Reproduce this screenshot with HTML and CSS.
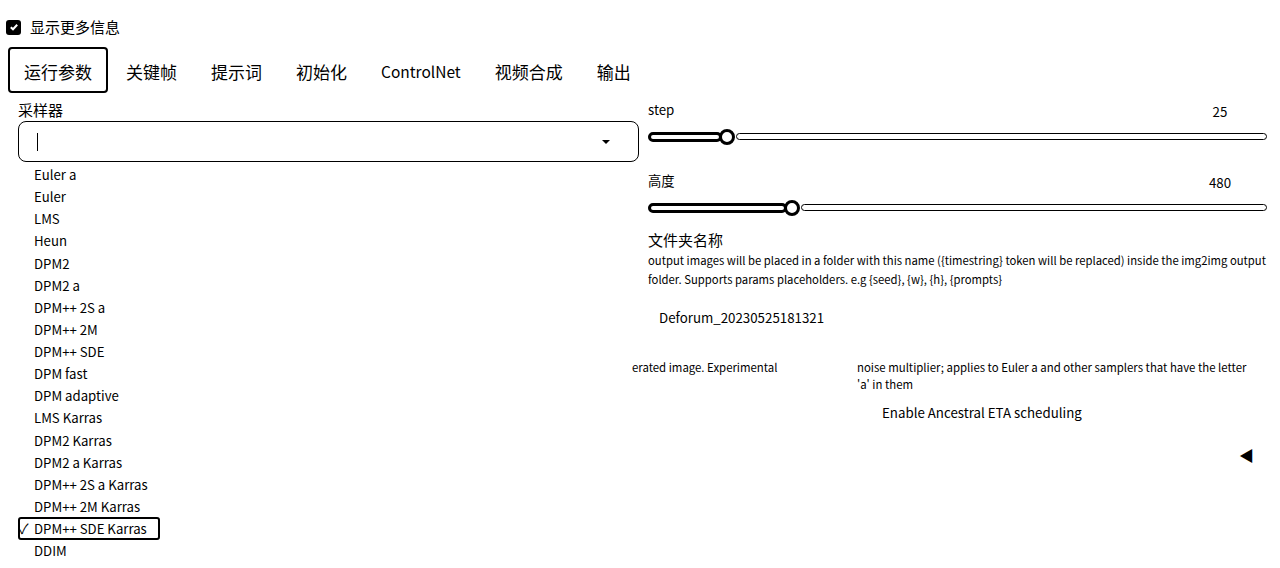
FILE: index.html
```html
<!DOCTYPE html>
<html lang="zh">
<head>
<meta charset="utf-8">
<link rel="stylesheet" href="styles.css">
</head>
<body>
<div class="topbar">
  <span class="cbox"><svg width="10" height="10" viewBox="0 0 10 10"><path d="M1.8 5.2 L4 7.3 L8.2 2.8" fill="none" stroke="#fff" stroke-width="2"/></svg></span>
  <span class="toplabel">显示更多信息</span>
</div>
<div class="tabs">
  <div class="tab active">运行参数</div>
  <div class="tab">关键帧</div>
  <div class="tab">提示词</div>
  <div class="tab">初始化</div>
  <div class="tab latin">ControlNet</div>
  <div class="tab">视频合成</div>
  <div class="tab">输出</div>
</div>
<div class="main">
  <div class="leftcol">
    <div class="label">采样器</div>
    <div class="select">
      <span class="caret"></span>
      <span class="arrow"></span>
    </div>
    <ul class="dropdown">
      <li>Euler a</li>
      <li>Euler</li>
      <li>LMS</li>
      <li>Heun</li>
      <li>DPM2</li>
      <li>DPM2 a</li>
      <li>DPM++ 2S a</li>
      <li>DPM++ 2M</li>
      <li>DPM++ SDE</li>
      <li>DPM fast</li>
      <li>DPM adaptive</li>
      <li>LMS Karras</li>
      <li>DPM2 Karras</li>
      <li>DPM2 a Karras</li>
      <li>DPM++ 2S a Karras</li>
      <li>DPM++ 2M Karras</li>
      <li class="selected"><span class="tick">✓</span>DPM++ SDE Karras</li>
      <li>DDIM</li>
    </ul>
  </div>
  <div class="rightcol">
    <div class="slider">
      <div class="shead"><span class="slabel">step</span><span class="sval">25</span></div>
      <div class="strack">
        <div class="sfill" style="width:68px"></div>
        <div class="sthumb"></div>
        <div class="srest"></div>
      </div>
    </div>
    <div class="slider second">
      <div class="shead"><span class="slabel">高度</span><span class="sval">480</span></div>
      <div class="strack">
        <div class="sfill" style="width:133px"></div>
        <div class="sthumb"></div>
        <div class="srest"></div>
      </div>
    </div>
    <div class="folder">
      <div class="ftitle">文件夹名称</div>
      <div class="fdesc">output images will be placed in a folder with this name ({timestring} token will be replaced) inside the img2img output folder. Supports params placeholders. e.g {seed}, {w}, {h}, {prompts}</div>
      <div class="finput">Deforum_20230525181321</div>
    </div>
  </div>
</div>
<div class="lower">
  <div class="lcol"></div>
  <div class="mcol">erated image. Experimental</div>
  <div class="rcol">
    <div class="note">noise multiplier; applies to Euler a and other samplers that have the letter 'a' in them</div>
    <div class="check"><span class="cbspace"></span>Enable Ancestral ETA scheduling</div>
  </div>
</div>
<div class="accordion"><span class="tri">◀</span></div>
</body>
</html>
```
FILE: styles.css
```css
html, body {
  margin: 0;
  padding: 0;
  background: #fff;
  color: #000;
  font-family: "Noto Sans CJK SC", "Noto Sans", sans-serif;
}
body {
  width: 1280px;
  height: 568px;
  overflow: hidden;
  position: relative;
}
.topbar {
  display: flex;
  align-items: center;
  height: 22px;
  padding: 16px 0 0 6px;
}
.cbox {
  width: 15px;
  height: 15px;
  background: #000;
  border-radius: 3px;
  display: flex;
  align-items: center;
  justify-content: center;
}
.toplabel {
  margin-left: 9px;
  font-size: 15px;
  line-height: 22px;
}
.tabs {
  display: flex;
  align-items: center;
  margin-top: 9px;
  padding-left: 8px;
  height: 46px;
}
.tab {
  font-size: 17px;
  line-height: 39px;
  padding: 3px 15px 0;
  border: 2px solid transparent;
  border-radius: 4px;
  white-space: nowrap;
}
.tab.latin {
  font-size: 15.5px;
}
.tab.active {
  border-color: #000;
  padding: 3px 14px 0;
  margin-right: 1px;
}
.main {
  display: grid;
  grid-template-columns: 621px 619px;
  column-gap: 9px;
  padding-left: 18px;
  margin-top: 7px;
  height: 251px;
}
.leftcol {
  position: relative;
}
.label {
  font-size: 15px;
  line-height: 20px;
  height: 20px;
}
.select {
  margin-top: 1px;
  height: 39px;
  border: 1px solid #000;
  border-radius: 8px;
  display: flex;
  align-items: center;
  justify-content: space-between;
  padding: 0 28px 0 18px;
}
.caret {
  width: 1px;
  height: 18px;
  background: #000;
}
.arrow {
  width: 0;
  height: 0;
  border-left: 4px solid transparent;
  border-right: 4px solid transparent;
  border-top: 4px solid #000;
}
.dropdown {
  position: absolute;
  top: 64px;
  left: 0;
  width: 613px;
  height: 420px;
  margin: 0;
  padding: 0;
  list-style: none;
  background: #fff;
  z-index: 5;
}
.dropdown li {
  font-size: 13.2px;
  height: 22.125px;
  line-height: 22px;
  padding-left: 16px;
  box-sizing: border-box;
}
.dropdown li.selected {
  position: relative;
  width: 142px;
  height: 23px;
  border: 2px solid #000;
  border-radius: 3px;
  padding-left: 14px;
  line-height: 19px;
  margin-top: -1px;
  margin-bottom: 0;
}
.tick {
  position: absolute;
  left: -1px;
  top: 0;
  font-size: 14px;
}
.rightcol {
  display: flex;
  flex-direction: column;
}
.slider {
  height: 53px;
}
.slider.second {
  margin-top: 18px;
}
.shead {
  display: flex;
  justify-content: space-between;
  height: 20px;
  line-height: 20px;
  font-size: 13.3px;
}
.sval {
  width: 94px;
  text-align: center;
  line-height: 24px;
}
.strack {
  display: flex;
  align-items: center;
  height: 33px;
}
.sfill {
  height: 4px;
  border: 3px solid #000;
  border-radius: 5px;
  margin-right: -3px;
}
.sthumb {
  width: 10px;
  height: 10px;
  border: 3px solid #000;
  border-radius: 50%;
  background: #fff;
  flex: none;
  position: relative;
  z-index: 1;
}
.srest {
  flex: 1;
  height: 5px;
  border: 1px solid #000;
  border-radius: 4px;
  margin-left: 1px;
}
.folder {
  margin-top: 6px;
}
.ftitle {
  font-size: 15px;
  line-height: 20px;
  height: 20px;
}
.fdesc {
  font-size: 11.3px;
  line-height: 19px;
  margin-top: 1px;
  margin-right: -6px;
}
.finput {
  margin-top: 10px;
  height: 38px;
  line-height: 38px;
  padding-left: 11px;
  font-size: 13.3px;
}
.lower {
  display: grid;
  grid-template-columns: 614px 225px 1fr;
  padding-left: 18px;
  margin-top: 8px;
}
.mcol {
  font-size: 11.4px;
  line-height: 17px;
}
.rcol {
  padding-right: 20px;
}
.note {
  font-size: 11.4px;
  line-height: 17px;
  width: 400px;
}
.check {
  display: flex;
  align-items: center;
  font-size: 13.3px;
  line-height: 24px;
  margin-top: 8px;
}
.cbspace {
  display: inline-block;
  width: 25px;
}
.accordion {
  display: flex;
  justify-content: flex-end;
  padding-right: 26px;
  margin-top: 20px;
  font-size: 15px;
  line-height: 20px;
}
```
